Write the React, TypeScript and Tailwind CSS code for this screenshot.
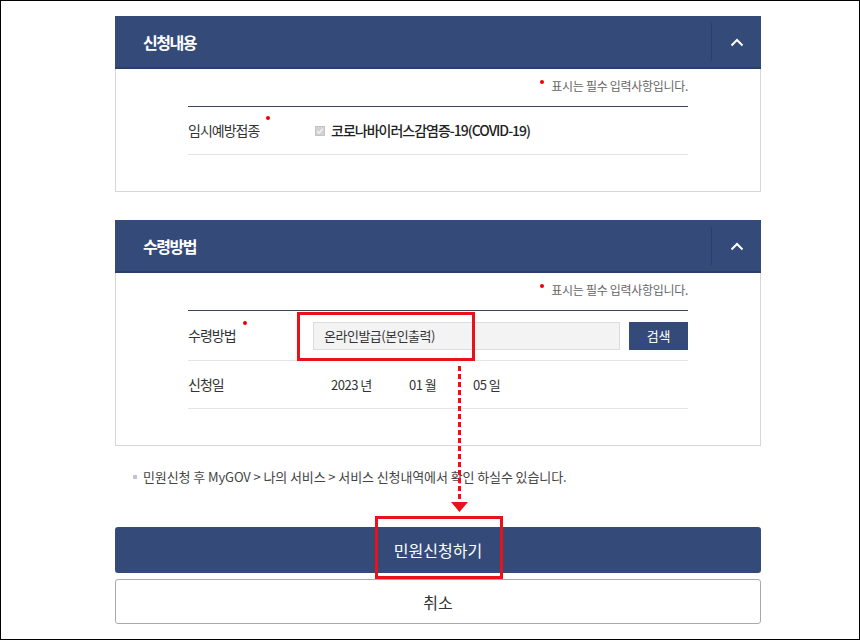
import React from "react";

const font = { fontFamily: '"Noto Sans CJK KR", "Noto Sans", sans-serif' };

function Chevron() {
  return (
    <svg width="14" height="9" viewBox="0 0 14 9" fill="none">
      <path d="M1.5 7.5 L7 2 L12.5 7.5" stroke="#ffffff" strokeWidth="2" />
    </svg>
  );
}

function Header({ title }: { title: string }) {
  return (
    <div className="h-[53px] bg-[#344b7a] border-b-2 border-[#2c3f68] flex items-center">
      <div className="flex-1 pl-[28px] text-white text-[16px] font-bold tracking-[-1.5px]">{title}</div>
      <div className="w-px h-[38px] bg-[#2b3e66]" />
      <div className="w-[49px] h-full flex items-center justify-center pt-[2px]">
        <Chevron />
      </div>
    </div>
  );
}

function RequiredNote() {
  return (
    <div className="h-[16px] flex justify-end items-center text-[12px] text-[#666] tracking-[-0.3px]">
      <span className="w-[4px] h-[4px] rounded-full bg-[#e00] mr-[7px] -mt-[8px]" />
      <span>표시는 필수 입력사항입니다.</span>
    </div>
  );
}

function Label({ text, required }: { text: string; required?: boolean }) {
  return (
    <div className="w-[125px] shrink-0 text-[14px] text-[#333] tracking-[-1px]">
      <span className="relative">
        {text}
        {required && (
          <span className="absolute -right-[11px] -top-[4px] w-[4px] h-[4px] rounded-full bg-[#e00]" />
        )}
      </span>
    </div>
  );
}

function Panel({ title, children }: { title: string; children: React.ReactNode }) {
  return (
    <section>
      <Header title={title} />
      <div className="border-x border-b border-[#d6d6d6] px-[72px] pt-[9px] pb-[36px]">
        <RequiredNote />
        <div className="mt-[12px] border-t border-[#3b4659]">{children}</div>
      </div>
    </section>
  );
}

export default function App() {
  return (
    <div style={font} className="relative w-[860px] h-[640px] border border-black bg-white overflow-hidden">
      <div className="ml-[114px] w-[646px] pt-[15px]">
        <Panel title="신청내용">
          <div className="h-[48px] border-b border-[#e4e4e4] flex items-center">
            <Label text="임시예방접종" required />
            <div className="flex items-center pl-[2px]">
              <span className="w-[10px] h-[10px] bg-[#d2d2d2] border border-[#c4c4c4] flex items-center justify-center">
                <svg width="8" height="8" viewBox="0 0 8 8">
                  <path d="M1.2 4 L3.2 6 L6.8 1.8" stroke="#f4f4f4" strokeWidth="1.4" fill="none" />
                </svg>
              </span>
              <span className="ml-[6px] text-[14px] font-medium text-[#222] tracking-[-1px]">
                코로나바이러스감염증-19(COVID-19)
              </span>
            </div>
          </div>
        </Panel>

        <div className="h-[28px]" />

        <Panel title="수령방법">
          <div className="h-[50px] border-b border-[#e4e4e4] flex items-center">
            <Label text="수령방법" required />
            <div className="w-[308px] h-[28px] bg-[#f3f3f3] border border-[#dcdcdc] flex items-center pl-[10px] text-[13px] text-[#333] tracking-[-0.5px]">
              온라인발급(본인출력)
            </div>
            <button className="ml-[9px] w-[59px] h-[28px] bg-[#344b7a] text-white text-[13px]">검색</button>
          </div>
          <div className="h-[48px] border-b border-[#e4e4e4] flex items-center">
            <Label text="신청일" />
            <div className="flex items-center text-[13px] text-[#333] pl-[18px] tracking-[-0.5px]">
              <span className="w-[78px]">2023 년</span>
              <span className="w-[64px]">01 월</span>
              <span>05 일</span>
            </div>
          </div>
        </Panel>

        <div className="mt-[23px] h-[16px] flex items-center pl-[18px] text-[13px] text-[#444] tracking-[-0.1px]">
          <span className="w-[4px] h-[4px] bg-[#c4c4c4] mr-[6px]" />
          <span>민원신청 후 MyGOV &gt; 나의 서비스 &gt; 서비스 신청내역에서 확인 하실수 있습니다.</span>
        </div>

        <button className="mt-[42px] w-full h-[46px] rounded-[3px] bg-[#344b7a] text-white text-[16px] flex items-center justify-center">
          민원신청하기
        </button>
        <button className="mt-[6px] w-full h-[45px] rounded-[3px] border border-[#a9a9a9] bg-white text-[#333] text-[16px] flex items-center justify-center">
          취소
        </button>
      </div>

      {/* annotations */}
      <div className="absolute left-[296px] top-[311px] w-[178px] h-[49px] border-[3px] border-[#e8121b]" />
      <svg className="absolute left-[449px] top-[362px]" width="20" height="152" viewBox="0 0 20 152">
        <line x1="9.5" y1="3" x2="9.5" y2="138" stroke="#e8121b" strokeWidth="3" strokeDasharray="5 3" />
        <polygon points="1,139 18,139 9.5,149" fill="#e8121b" />
      </svg>
      <div className="absolute left-[374px] top-[515px] w-[128px] h-[63px] border-[3px] border-[#e8121b]" />
    </div>
  );
}
